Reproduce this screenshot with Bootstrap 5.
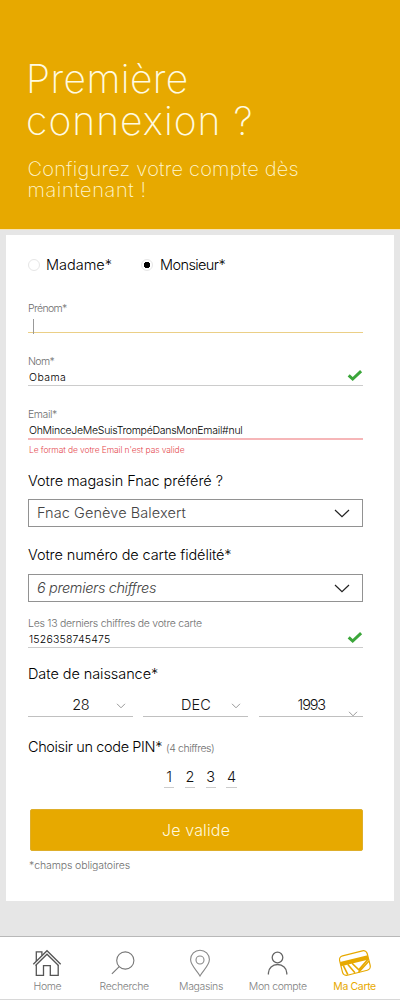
<!DOCTYPE html>
<html lang="fr">
<head>
<meta charset="utf-8">
<meta name="viewport" content="width=device-width, initial-scale=1">
<title>Première connexion</title>
<link href="https://cdn.jsdelivr.net/npm/bootstrap@5.3.0/dist/css/bootstrap.min.css" rel="stylesheet">
<style>
  :root { --gold: #e7a900; }
  body { font-family: Inter, "Liberation Sans", sans-serif; font-weight: 300; background: #e6e6e6; color: #111; height: 1000px; overflow: hidden; }

  /* header */
  .hero { background: var(--gold); height: 230px; padding: 58px 0 0 26px; border-bottom: 1px solid #f6e3b4; color: #fffbe2; white-space: nowrap; }
  .hero h1 { font-size: 39px; line-height: 42px; font-weight: 200; margin: 0 0 17px; letter-spacing: .4px; }
  .hero h1 .wide { letter-spacing: 1.05px; }
  .hero p { font-size: 20px; line-height: 20.5px; font-weight: 200; margin: 0; padding-left: 1.5px; letter-spacing: .22px; color: #fff6d0; }
  .hero p .wide { letter-spacing: .6px; }

  /* form card */
  .panel { margin: 5px 6px 0; height: 666px; padding: 20px 31px 0 22px; white-space: nowrap; }
  .heading, .choice { font-size: 14.5px; line-height: 20px; margin: 0; font-weight: 300; color: #000; }
  .heading { letter-spacing: -.07px; }
  .choices { height: 20px; margin-bottom: 27px; }
  .choice { width: 95px; }
  .choice.k7 { letter-spacing: -.6px; }
  .dot { width: 12px; height: 12px; border: 1px solid #e6e6e6; border-radius: 50%; margin-right: 6px; }
  .dot.on { margin-right: 7px; background: radial-gradient(circle, #000 0 2.9px, #fff 3.5px); }
  .caption { display: block; font-size: 10.5px; line-height: 14px; color: #6e6e6e; }
  .entry { height: 17px; padding: 1px 0 0 1px; border-bottom: 1px solid #ccc; font-size: 10.5px; line-height: 15px; position: relative; color: #000; }
  .entry.active { border-color: #ebcf86; padding: 3px 0 0 5px; }
  .entry.bad { height: 18px; padding-top: 2px; line-height: 14px; border-bottom: 2px solid #f6b6b8; }
  .entry svg { position: absolute; right: 0; bottom: 3px; }
  .caret { width: 1px; height: 15px; background: #999; }
  .gap-field { margin-top: 22px; }
  .problem { font-size: 8.5px; line-height: 12px; color: #e5484e; padding: 4px 0 0 1px; height: 15px; }
  .picker { height: 28px; border: 1px solid #929292; padding: 0 12px 0 8px; font-size: 14.5px; color: #444; margin-bottom: 18px; }
  .number-title { margin-bottom: 9px; }
  .number-picker { margin-bottom: 15px; }
  .date { margin-top: 11px; }
  .date > div { width: 104.5px; height: 22px; border-bottom: 1px solid #c0c0c0; font-size: 14.5px; line-height: 20px; text-align: center; position: relative; padding-left: 1px; }
  .date svg { position: absolute; right: 7px; top: 8px; }
  .date > div:last-child svg { right: 5px; top: 16px; }
  .pin-title { margin-top: 20px; }
  .pin { height: 21px; gap: 10.4px; margin: 10px 0 21px 136px; font-size: 14.5px; line-height: 20px; text-align: center; }
  .pin span { width: 10.4px; border-bottom: 1px solid #ccc; }
  .btn-gold { --bs-btn-color: #fff8da; --bs-btn-bg: var(--gold); --bs-btn-border-color: #deae2a; width: 333px; height: 42px; margin: 0 0 8px 2px; padding: 0 1px 0 0; border-radius: 2px; font-size: 16px; font-weight: 300; letter-spacing: .15px; }
  .footnote { margin-left: 1px; }

  /* tracking per text length */
  .k0 { letter-spacing: 0; } .k1 { letter-spacing: -.11px; } .k2 { letter-spacing: -.27px; }
  .k3 { letter-spacing: -.37px; } .k5 { letter-spacing: -.43px; } .k7 { letter-spacing: -.62px; }
  .k13 { letter-spacing: -1.15px; } .w1 { letter-spacing: .08px; } .w3 { letter-spacing: .2px; } .w5 { letter-spacing: .45px; }

  /* bottom navigation */
  .tabs { margin-top: 35px; height: 64px; background: #fff; border-top: 1px solid #b8b8b8; border-bottom: 1px solid #d8d8d8; padding-left: 9px; font-size: 10.5px; line-height: 14px; }
  .tabs a { width: 76.8px; padding-top: 8px; color: #808080; text-decoration: none; letter-spacing: -.36px; white-space: nowrap; }
  .tabs svg { width: 36px; height: 34px; margin-bottom: 1px; }
  .tabs a.now { color: var(--gold); font-weight: 400; }
</style>
</head>
<body>
<header class="hero">
  <h1>Première<br><span class="wide">connexion ?</span></h1>
  <p>Configurez votre compte dès<br><span class="wide">maintenant !</span></p>
</header>

<main class="panel bg-white">
  <div class="choices d-flex align-items-center">
    <span class="dot"></span><span class="choice k0">Madame*</span>
    <span class="dot on"></span><span class="choice k7">Monsieur*</span>
  </div>

  <label class="caption k7">Prénom*</label>
  <div class="entry active"><div class="caret"></div></div>

  <label class="caption k7 gap-field">Nom*</label>
  <div class="entry w5">Obama
    <svg width="16" height="13" viewBox="0 0 16 13"><path d="M1.700 6.300 5.700 10 14.100 2.200" fill="none" stroke="#3ba63a" stroke-width="3"/></svg>
  </div>

  <label class="caption k5 gap-field">Email*</label>
  <div class="entry bad k2">OhMinceJeMeSuisTrompéDansMonEmail#nul</div>
  <div class="problem k1">Le format de votre Email n'est pas valide</div>

  <h2 class="heading mt-3 mb-2">Votre magasin Fnac préféré ?</h2>
  <div class="picker d-flex align-items-center justify-content-between">
    <span class="w1">Fnac Genève Balexert</span>
    <svg width="16" height="9" viewBox="0 0 16 9"><path d="M1 1 8 7.700 15 1" fill="none" stroke="#222" stroke-width="1.200"/></svg>
  </div>

  <h2 class="heading k1 number-title">Votre numéro de carte fidélité*</h2>
  <div class="picker number-picker d-flex align-items-center justify-content-between">
    <span class="k3 fst-italic">6 premiers chiffres</span>
    <svg width="16" height="9" viewBox="0 0 16 9"><path d="M1 1 8 7.700 15 1" fill="none" stroke="#222" stroke-width="1.200"/></svg>
  </div>

  <label class="caption k2">Les 13 derniers chiffres de votre carte</label>
  <div class="entry w3">1526358745475
    <svg width="16" height="13" viewBox="0 0 16 13"><path d="M1.700 6.300 5.700 10 14.100 2.200" fill="none" stroke="#3ba63a" stroke-width="3"/></svg>
  </div>

  <h2 class="heading mt-3">Date de naissance*</h2>
  <div class="date d-flex justify-content-between">
    <div class="k5">28<svg width="10" height="6" viewBox="0 0 10 6"><path d="M1 .8 5 4.800 9 .8" fill="none" stroke="#999"/></svg></div>
    <div class="w1">DEC<svg width="10" height="6" viewBox="0 0 10 6"><path d="M1 .8 5 4.800 9 .8" fill="none" stroke="#999"/></svg></div>
    <div class="k13">1993<svg width="10" height="6" viewBox="0 0 10 6"><path d="M1 .8 5 4.800 9 .8" fill="none" stroke="#999"/></svg></div>
  </div>

  <div class="pin-title d-flex align-items-baseline">
    <h2 class="heading k3">Choisir un code PIN*</h2><span class="caption k5 ms-1">(4 chiffres)</span>
  </div>
  <div class="pin d-flex"><span>1</span><span>2</span><span>3</span><span>4</span></div>

  <button type="button" class="btn btn-gold">Je valide</button>
  <div class="caption footnote k1">*champs obligatoires</div>
</main>

<nav class="tabs d-flex">
  <a href="#" class="d-flex flex-column align-items-center">
    <svg viewBox="0 0 36 34" fill="none" stroke="#555" stroke-width="1.300"><path d="M4.300 19.200 18 5.700 31.700 19.200"/><path d="M6.500 20.500 18 9.200 29.500 20.500"/><path d="M7.300 16V6.900h5.600v3.600M7.300 19.900v10.400h7.200V20.700h6.800v9.600h7.900V19.900"/></svg>
    Home</a>
  <a href="#" class="d-flex flex-column align-items-center">
    <svg viewBox="0 0 36 34" fill="none" stroke="#777" stroke-width="1.100"><circle cx="19.300" cy="15.500" r="8.600"/><path d="M13.200 21.600 5.900 28.900"/></svg>
    Recherche</a>
  <a href="#" class="d-flex flex-column align-items-center">
    <svg viewBox="0 0 36 34" fill="none" stroke="#888" stroke-width="1.100"><path d="M17 31C14 25.500 7.600 20.500 7.600 14.600a9.400 9.400 0 0 1 18.800 0C26.400 20.500 20 25.500 17 31Z"/><circle cx="17" cy="15" r="4"/></svg>
    Magasins</a>
  <a href="#" class="d-flex flex-column align-items-center">
    <svg viewBox="0 0 36 34" fill="none" stroke="#666" stroke-width="1.300"><circle cx="17.500" cy="12.500" r="5.300"/><path d="M8.400 29.500V28a9.200 8.500 0 0 1 18.400 0v1.500"/></svg>
    Mon compte</a>
  <a href="#" class="now d-flex flex-column align-items-center">
    <svg viewBox="0 0 36 34"><g transform="rotate(-14 18 17.800)"><rect x="3.600" y="8" width="28.500" height="20" rx="4" fill="#fff" stroke="#e7a900" stroke-width="1.200"/><path d="M3.600 13.500h28.500v4.300H3.600Z" fill="#e7a900"/><path d="M15 17.500 20 25.500 31.500 17.500M6 17.500 8.200 27.500M10.500 17.500 15.500 27.500M19 28 32 19.500" fill="none" stroke="#e7a900" stroke-width="1.600"/></g></svg>
    Ma Carte</a>
</nav>
</body>
</html>
